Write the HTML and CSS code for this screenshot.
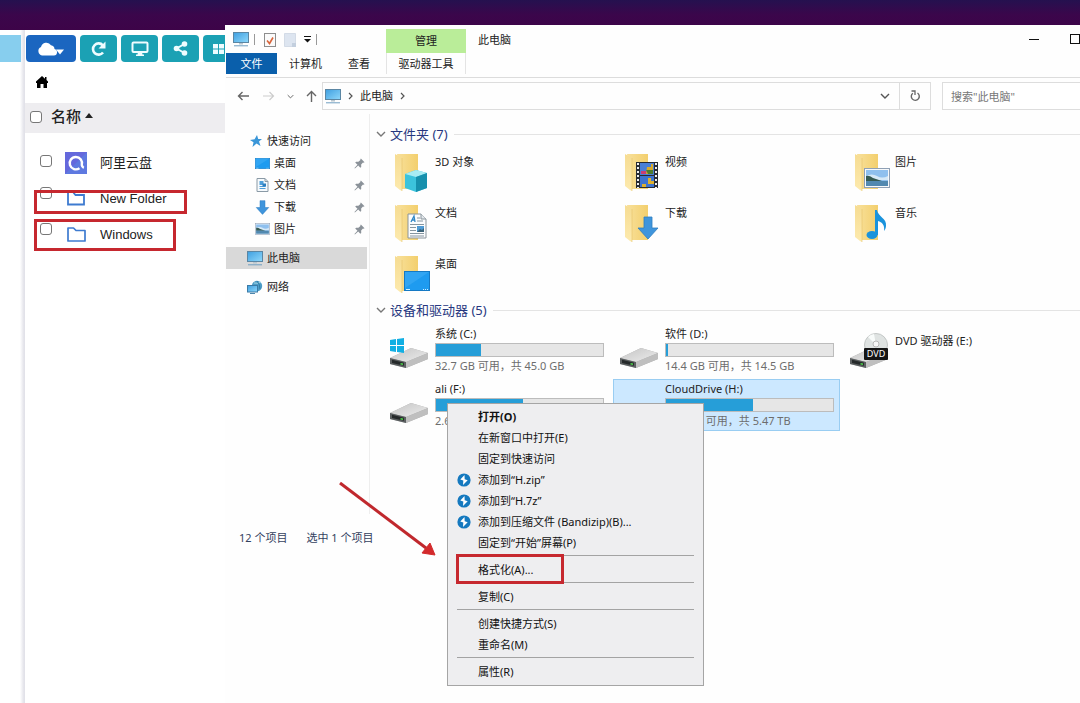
FILE: index.html
```html
<!DOCTYPE html>
<html lang="zh-CN">
<head>
    <meta charset="UTF-8">
    <meta name="viewport" content="width=device-width, initial-scale=1.0">
    <title>此电脑</title>
    <link rel="stylesheet" href="styles.css">
</head>
<body>

<svg class="sprite" width="0" height="0" aria-hidden="true">
    <defs>
        <linearGradient id="gScreen" x1="0" y1="0" x2="1" y2="1">
            <stop offset="0" stop-color="#3f9fe0"/><stop offset="1" stop-color="#8fd8fb"/>
        </linearGradient>
        <linearGradient id="gFolder" x1="0" y1="0" x2="1" y2="0">
            <stop offset="0" stop-color="#f8e09a"/><stop offset="1" stop-color="#f3cf6d"/>
        </linearGradient>
        <linearGradient id="gFlap" x1="0" y1="0" x2="0" y2="1">
            <stop offset="0" stop-color="#f6dc92"/><stop offset="1" stop-color="#fdeaae"/>
        </linearGradient>
        <linearGradient id="gDrive" x1="0" y1="0" x2="1" y2="1">
            <stop offset="0" stop-color="#c4c4c4"/><stop offset="1" stop-color="#ededed"/>
        </linearGradient>
    </defs>
    <symbol id="pc" viewBox="0 0 16 15">
        <rect x="0.5" y="0.5" width="15" height="10" fill="url(#gScreen)" stroke="#5b86a3"/>
        <path d="M6 11h4v1.5H6z" fill="#b9c6cf"/>
        <path d="M1 13.8h14" stroke="#6f9fc0" stroke-width="1"/>
    </symbol>
    <symbol id="folder" viewBox="0 0 38 40">
        <path d="M3 1h21v35H7z" fill="url(#gFolder)"/>
        <path d="M1 1l7 4v33l-2-1-5-4z" fill="url(#gFlap)"/>
        <path d="M8 5v33" stroke="#e6c46a" stroke-width="0.6"/>
    </symbol>
    <symbol id="doc" viewBox="0 0 20 26">
        <path d="M1 1h13l5 5v19H1z" fill="#fbfcfd" stroke="#8a959c"/>
        <path d="M14 1v5h5" fill="#e3e8ec" stroke="#8a959c"/>
        <path d="M4 9l3-6 1 6M5 7h3" fill="none" stroke="#2f86c6" stroke-width="1.3"/>
        <path d="M10 5h3M10 8h6M3 11.500h14M3 14.500h6M3 17.500h6M3 20.500h14M3 23h14" stroke="#8796a1" stroke-width="1"/>
        <rect x="10" y="13" width="7" height="6" fill="#4f9bd4"/>
        <path d="M10 19l3-3 2 1 2-2v4z" fill="#3b6277"/>
    </symbol>
    <symbol id="doc-small" viewBox="0 0 12 14">
        <path d="M.5.5h8l3 3v10H.5z" fill="#f6fafd" stroke="#8a9aa6"/>
        <path d="M8.500.5v3h3" fill="none" stroke="#8a9aa6"/>
        <rect x="3" y="3" width="4" height="4" fill="#4f9fda"/>
        <path d="M3 8.500h6M3 10.500h6" stroke="#4f9fda"/>
        <rect x="6" y="5.500" width="3.500" height="3" fill="#2d7fc0"/>
    </symbol>
    <symbol id="down" viewBox="0 0 22 24">
        <path d="M7 1h8v11h6L11 23 1 12h6z" fill="#3f95dc" stroke="#2d7dc0" stroke-width="0.8"/>
    </symbol>
    <symbol id="photo" viewBox="0 0 26 20">
        <rect x="0.5" y="0.5" width="25" height="19" fill="#f7f9fb" stroke="#8fa0b5"/>
        <rect x="2" y="2" width="22" height="16" fill="#8fc0ee"/>
        <path d="M2 8q6-3 11 0t11 0v4H2z" fill="#d6e9f7"/>
        <path d="M2 8q3-1 7 2l9 3H2z" fill="#365a52"/>
        <path d="M2 13h22v5H2z" fill="#5289b0"/>
    </symbol>
    <symbol id="screen" viewBox="0 0 26 20">
        <rect x="0.5" y="0.5" width="25" height="19" fill="#1e9bf0" stroke="#1579c4"/>
        <path d="M1 1h24L1 17z" fill="#44b0f6" opacity="0.5"/>
        <path d="M2 18.500h4M19 18.500h1M21 18.500h1M23 18.500h1" stroke="#d3efff" stroke-width="1"/>
    </symbol>
    <symbol id="pin" viewBox="0 0 12 12">
        <path d="M7.500.5l4 4-1 .6-.7-.1-2 2.200.1 2.500-1 1L4.600 8.200 1 11.500l-.5-.5 3.300-3.600L1.300 5l1-1 2.500.1 2.200-2-.1-.7z" fill="#8b9299"/>
    </symbol>
    <symbol id="drive" viewBox="0 0 40 22">
        <path d="M1 11L22 1l17 5v6L17 21 1 17z" fill="#a9a9a9"/>
        <path d="M1 11L22 1l17 5-22 9z" fill="url(#gDrive)"/>
        <path d="M17 15l22-9v6l-22 9z" fill="#bfbfbf"/>
        <path d="M1 11l16 4v6L1 17z" fill="#5b5f60"/>
        <path d="M3 12.800l12 3v3L3 16z" fill="#25292a"/>
        <path d="M11.500 16.700l2.500.6" stroke="#4fd24b" stroke-width="1.600"/>
    </symbol>
    <symbol id="chevron" viewBox="0 0 10 6">
        <path d="M1 1l4 4 4-4" fill="none" stroke="currentColor" stroke-width="1.400"/>
    </symbol>
    <symbol id="angle" viewBox="0 0 5 8">
        <path d="M1 1l3 3-3 3" fill="none" stroke="#555" stroke-width="1.200"/>
    </symbol>
    <symbol id="bandizip" viewBox="0 0 14 14">
        <circle cx="7" cy="7" r="6.600" fill="#1579bf"/>
        <path d="M7.500 2L3.300 6.400l3 1L6 12l4.700-4.700-3-1z" fill="#fff"/>
    </symbol>
</svg>

<div class="banner"></div>

<div class="desktop">
    <aside class="tree"><div class="tree-selected"></div></aside>

    <section class="panel">
        <div class="toolbar">
            <button class="tool primary" aria-label="云盘">
                <svg width="28" height="14" viewBox="0 0 28 14"><path d="M5 13.500a4.500 4.500 0 0 1-1-8.500A5.500 5.500 0 0 1 14 3.200 4 4 0 0 1 17.500 7a3.300 3.300 0 0 1-.5 6.500z" fill="#fff"/><path d="M19 7.500h8l-4 5z" fill="#fff"/></svg>
            </button>
            <button class="tool" aria-label="刷新">
                <svg width="17" height="16" viewBox="0 0 17 16"><path d="M12.800 4.300A5.600 5.600 0 1 0 13 11.500" fill="none" stroke="#eefcff" stroke-width="2.600"/><path d="M15.500.5v7h-7z" fill="#eefcff"/></svg>
            </button>
            <button class="tool" aria-label="显示">
                <svg width="18" height="16" viewBox="0 0 18 16"><rect x="1.500" y="1.500" width="15" height="9.500" rx="1" fill="none" stroke="#eefcff" stroke-width="2"/><path d="M7 11h4l.5 2.500H13V15H5v-1.500h1.500z" fill="#eefcff"/></svg>
            </button>
            <button class="tool" aria-label="分享">
                <svg width="15" height="15" viewBox="0 0 15 15"><path d="M11.500 3l-8 4.500 8 4.500" fill="none" stroke="#eefcff" stroke-width="2"/><circle cx="11.500" cy="3" r="2.800" fill="#eefcff"/><circle cx="3.500" cy="7.500" r="2.800" fill="#eefcff"/><circle cx="11.500" cy="12" r="2.800" fill="#eefcff"/></svg>
            </button>
            <button class="tool" aria-label="视图">
                <svg width="17" height="10" viewBox="0 0 17 10"><path d="M0 0h5v4.400H0zM6 0h5v4.400H6zM12 0h5v4.400h-5zM0 5.600h5V10H0zM6 5.600h5V10H6zM12 5.600h5V10h-5z" fill="#eefcff"/></svg>
            </button>
        </div>
        <a class="home" href="#" aria-label="主页">
            <svg width="12" height="12" viewBox="0 0 12 12"><path d="M6 0L0 5.500V7h1v5h3.500V8h3v4H11V7h1V5.500L10.500 4V1H9v1.700z" fill="#000"/></svg>
        </a>

        <table class="files">
            <thead>
                <tr>
                    <th colspan="3"><label><input type="checkbox">名称 <svg width="8" height="5" viewBox="0 0 8 5"><path d="M0 5l4-5 4 5z" fill="#222"/></svg></label></th>
                </tr>
            </thead>
            <tbody>
                <tr>
                    <td class="check"><input type="checkbox" aria-label="阿里云盘"></td>
                    <td class="icon">
                        <svg width="22" height="22" viewBox="0 0 22 22"><rect width="22" height="22" fill="#6468dc"/><path d="M0 22L22 0v22z" fill="#5a86e2" opacity="0.6"/><path d="M14.500 16.200a6.200 6.200 0 1 1 2.300-3.200q.3 2 2 2.800" fill="none" stroke="#fff" stroke-width="2.400"/></svg>
                    </td>
                    <td><a href="#">阿里云盘</a></td>
                </tr>
                <tr>
                    <td class="check"><input type="checkbox" aria-label="New Folder"></td>
                    <td class="icon">
                        <svg width="22" height="15" viewBox="0 0 22 15"><path d="M3 0v12.500h16V3h-8.500L8 0" fill="none" stroke="#3e7bd0" stroke-width="1.800"/></svg>
                    </td>
                    <td><a href="#">New Folder</a></td>
                </tr>
                <tr>
                    <td class="check"><input type="checkbox" aria-label="Windows"></td>
                    <td class="icon">
                        <svg width="22" height="18" viewBox="0 0 22 18"><path d="M3 2v13h17V4.500h-9L8.500 2z" fill="none" stroke="#3e7bd0" stroke-width="1.700" stroke-linejoin="round"/></svg>
                    </td>
                    <td><a href="#">Windows</a></td>
                </tr>
            </tbody>
        </table>
        <div class="mark mark-new"></div>
        <div class="mark mark-windows"></div>
    </section>

    <main class="explorer">
        <header class="ribbon">
            <div class="ribbon-left">
                <div class="quick">
                    <svg width="16" height="15"><use href="#pc"/></svg>
                    <i></i>
                    <svg width="12" height="14" viewBox="0 0 12 14"><rect x="0.5" y="0.5" width="11" height="13" fill="#fafafa" stroke="#8d8d8d"/><path d="M3 7.500l2.500 3L9 4.500" fill="none" stroke="#d9653b" stroke-width="1.600"/></svg>
                    <svg width="12" height="14" viewBox="0 0 12 14"><path d="M.5.5h11v13H.5z" fill="#dde5f0" stroke="#d3dbe6"/><path d="M8 10h4v4H8z" fill="#c3cfde"/></svg>
                    <svg width="7" height="7" viewBox="0 0 7 7"><path d="M0 .5h7" stroke="#111"/><path d="M0 3h7L3.500 6.500z" fill="#111"/></svg>
                    <i></i>
                </div>
                <nav class="tabs">
                    <button class="tab file">文件</button>
                    <button class="tab">计算机</button>
                    <button class="tab">查看</button>
                </nav>
            </div>
            <div class="manage">
                <div class="manage-title">管理</div>
                <button class="tab">驱动器工具</button>
            </div>
            <div class="title">此电脑</div>
            <div class="controls">
                <button aria-label="最小化"><svg width="10" height="10" viewBox="0 0 10 10"><path d="M0 5.500h10" stroke="#111"/></svg></button>
                <button aria-label="最大化"><svg width="10" height="10" viewBox="0 0 10 10"><rect x="0.500" y="0.500" width="9" height="9" fill="none" stroke="#111"/></svg></button>
            </div>
        </header>

        <div class="location">
            <div class="arrows">
                <button aria-label="后退"><svg width="12" height="10" viewBox="0 0 12 10"><path d="M12 5H1.500M5.500 1l-4 4 4 4" fill="none" stroke="#666" stroke-width="1.400"/></svg></button>
                <button aria-label="前进"><svg width="12" height="10" viewBox="0 0 12 10"><path d="M0 5h10.500M6.500 1l4 4-4 4" fill="none" stroke="#ccc" stroke-width="1.200"/></svg></button>
                <button aria-label="历史"><svg width="7" height="5"><use href="#chevron"/></svg></button>
                <button aria-label="上移"><svg width="11" height="12" viewBox="0 0 11 12"><path d="M5.500 12V1.500M1 6l4.500-4.500L10 6" fill="none" stroke="#666" stroke-width="1.400"/></svg></button>
            </div>
            <div class="address">
                <svg width="16" height="15"><use href="#pc"/></svg>
                <svg width="5" height="8"><use href="#angle"/></svg>
                <span>此电脑</span>
                <svg width="5" height="8"><use href="#angle"/></svg>
                <button class="drop" aria-label="展开"><svg width="10" height="6"><use href="#chevron"/></svg></button>
                <button class="refresh" aria-label="刷新"><svg width="11" height="12" viewBox="0 0 11 12"><path d="M2.800 3.200A4 4 0 1 0 7.500 3" fill="none" stroke="#666" stroke-width="1.400"/><path d="M1.500 1h3.500v4" fill="none" stroke="#666" stroke-width="1.300"/></svg></button>
            </div>
            <input class="search" type="text" placeholder='搜索"此电脑"' aria-label="搜索">
        </div>

        <div class="view">
            <nav class="places">
                <a href="#"><svg width="14" height="14" viewBox="0 0 14 14"><path d="M8 1l1.200 4H13L10 7.500l1.500 4.500L7.500 9.500 3.500 13l1-4.800L1 6l4.600-.8z" fill="#3a96d8"/></svg>快速访问</a>
                <a class="child" href="#"><svg width="15" height="11" viewBox="0 0 26 20" preserveAspectRatio="none"><use href="#screen" width="26" height="20"/></svg>桌面<svg class="pin" width="11" height="11"><use href="#pin"/></svg></a>
                <a class="child" href="#"><svg width="15" height="14"><use href="#doc-small"/></svg>文档<svg class="pin" width="11" height="11"><use href="#pin"/></svg></a>
                <a class="child" href="#"><svg width="15" height="15"><use href="#down"/></svg>下载<svg class="pin" width="11" height="11"><use href="#pin"/></svg></a>
                <a class="child" href="#"><svg width="15" height="12"><use href="#photo"/></svg>图片<svg class="pin" width="11" height="11"><use href="#pin"/></svg></a>
                <a class="root selected" href="#"><svg width="16" height="15"><use href="#pc"/></svg>此电脑</a>
                <a class="root" href="#"><svg width="16" height="15" viewBox="0 0 16 15"><circle cx="10" cy="6" r="5.200" fill="#4d9cc6"/><path d="M7 3q4 1 7-1" stroke="#a4d6e6" fill="none"/><path d="M10 1q3 3 3 8" stroke="#2f7da8" fill="none"/><rect x="0.500" y="5.500" width="10" height="6.500" fill="url(#gScreen)" stroke="#3c7ba6"/><path d="M3 13.500h5" stroke="#4d87ad"/></svg>网络</a>
            </nav>

            <div class="content">
                <h2><svg width="10" height="6"><use href="#chevron"/></svg>文件夹 (7)</h2>
                <div class="grid">
                    <a class="folder" href="#">
                        <svg width="38" height="40" viewBox="0 0 38 40"><use href="#folder" width="38" height="40"/><path d="M11 21l11-4 11 3v15l-11 4-11-4z" fill="#3cc3dc"/><path d="M11 21l11-4 11 3-11 4z" fill="#a9ecf3"/><path d="M22 24l11-4v15l-11 4z" fill="#1690ad"/></svg>
                        <span>3D 对象</span>
                    </a>
                    <a class="folder" href="#">
                        <svg width="38" height="40" viewBox="0 0 38 40"><use href="#folder" width="38" height="40"/><rect x="12" y="9" width="22" height="26" fill="#272b33"/><rect x="16" y="10" width="14" height="12" fill="#4a7fd6"/><rect x="16" y="23" width="14" height="11" fill="#3f74cf"/><path d="M17 18h5v3h-5z" fill="#cc3d74"/><path d="M23 14h4v-3h2v7h-3v3h-4z" fill="#d9aa2a"/><path d="M22 17h7v4h-5z" fill="#4d7c2e"/><path d="M24 25h3v3h3v3h-6zM18 31h4v3h-4z" fill="#dfb12e"/><path d="M14 10v25M32 10v25" stroke="#f1f1f1" stroke-width="2" stroke-dasharray="2 2"/></svg>
                        <span>视频</span>
                    </a>
                    <a class="folder" href="#">
                        <svg width="38" height="40" viewBox="0 0 38 40"><use href="#folder" width="38" height="40"/><use href="#photo" x="10" y="15" width="26" height="20"/></svg>
                        <span>图片</span>
                    </a>
                    <a class="folder" href="#">
                        <svg width="38" height="40" viewBox="0 0 38 40"><use href="#folder" width="38" height="40"/><use href="#doc" x="13" y="9" width="20" height="26"/></svg>
                        <span>文档</span>
                    </a>
                    <a class="folder" href="#">
                        <svg width="38" height="40" viewBox="0 0 38 40"><use href="#folder" width="38" height="40"/><use href="#down" x="13" y="12" width="22" height="24"/></svg>
                        <span>下载</span>
                    </a>
                    <a class="folder" href="#">
                        <svg width="38" height="40" viewBox="0 0 38 40"><use href="#folder" width="38" height="40"/><ellipse cx="18" cy="31" rx="5.500" ry="4" fill="#1a93dc"/><path d="M21 31V6h2c1 7 10 8 9 16-.3 3-1.300 4-2 5 1-6-2-9-6-10v14z" fill="#1a93dc"/></svg>
                        <span>音乐</span>
                    </a>
                    <a class="folder" href="#">
                        <svg width="38" height="40" viewBox="0 0 38 40"><use href="#folder" width="38" height="40"/><use href="#screen" x="10" y="16" width="26" height="20"/></svg>
                        <span>桌面</span>
                    </a>
                </div>

                <h2><svg width="10" height="6"><use href="#chevron"/></svg>设备和驱动器 (5)</h2>
                <div class="grid">
                    <a class="disk" href="#">
                        <svg width="40" height="34" viewBox="0 0 40 34"><use href="#drive" y="11" width="40" height="22"/><path d="M1 4l6-1v6H1zM8 3l7-1v7H8zM1 10h6v6l-6-1zM8 10h7v7l-7-1z" fill="#12afe3"/></svg>
                        <div class="info">
                            <span class="name">系统 (C:)</span>
                            <div class="bar"><div class="used" style="width: 27%"></div></div>
                            <span class="free">32.7 GB 可用，共 45.0 GB</span>
                        </div>
                    </a>
                    <a class="disk" href="#">
                        <svg width="40" height="34" viewBox="0 0 40 34"><use href="#drive" y="11" width="40" height="22"/></svg>
                        <div class="info">
                            <span class="name">软件 (D:)</span>
                            <div class="bar"><div class="used" style="width: 1%"></div></div>
                            <span class="free">14.4 GB 可用，共 14.5 GB</span>
                        </div>
                    </a>
                    <a class="disk dvd" href="#">
                        <svg width="40" height="38" viewBox="0 0 40 38"><use href="#drive" y="15" width="40" height="22"/><circle cx="27" cy="13" r="11.500" fill="#dfe3e2" stroke="#c3c7c6"/><path d="M27 13L19 5a11 11 0 0 1 6-3z" fill="#f8fbfa"/><circle cx="27" cy="12" r="3" fill="#f7f7f7" stroke="#b8b8b8"/><rect x="15" y="16" width="24" height="12" rx="1" fill="#151515"/><text x="27" y="25" class="dvd-label">DVD</text></svg>
                        <div class="info"><span class="name">DVD 驱动器 (E:)</span></div>
                    </a>
                    <a class="disk" href="#">
                        <svg width="40" height="34" viewBox="0 0 40 34"><use href="#drive" y="11" width="40" height="22"/></svg>
                        <div class="info">
                            <span class="name">ali (F:)</span>
                            <div class="bar"><div class="used" style="width: 52%"></div></div>
                            <span class="free">2.63 TB 可用，共 5.47 TB</span>
                        </div>
                    </a>
                    <a class="disk active" href="#">
                        <svg width="40" height="34" viewBox="0 0 40 34"><use href="#drive" y="11" width="40" height="22"/></svg>
                        <div class="info">
                            <span class="name">CloudDrive (H:)</span>
                            <div class="bar"><div class="used" style="width: 52%"></div></div>
                            <span class="free">2.63 TB 可用，共 5.47 TB</span>
                        </div>
                    </a>
                </div>
            </div>
        </div>

        <footer class="status">
            <span>12 个项目</span>
            <span>选中 1 个项目</span>
        </footer>

        <div class="menu">
            <button><b>打开(O)</b></button>
            <button>在新窗口中打开(E)</button>
            <button>固定到快速访问</button>
            <button><svg width="14" height="14"><use href="#bandizip"/></svg>添加到“H.zip”</button>
            <button><svg width="14" height="14"><use href="#bandizip"/></svg>添加到“H.7z”</button>
            <button><svg width="14" height="14"><use href="#bandizip"/></svg>添加到压缩文件 (Bandizip)(B)...</button>
            <button>固定到“开始”屏幕(P)</button>
            <hr>
            <button>格式化(A)...</button>
            <hr>
            <button>复制(C)</button>
            <hr>
            <button>创建快捷方式(S)</button>
            <button>重命名(M)</button>
            <hr>
            <button>属性(R)</button>
            <div class="mark mark-format"></div>
        </div>

        <svg class="arrow" width="100" height="78" viewBox="0 0 100 78"><path d="M2 3l86 65" stroke="#c0282d" stroke-width="3"/><path d="M97 75l-13-2 8-10z" fill="#d32a2c" stroke="#d32a2c"/></svg>
    </main>
</div>

</body>
</html>
```
FILE: styles.css
```css
* {
    box-sizing: border-box;
}
body {
    margin: 0;
    min-height: 100vh;
    display: flex;
    flex-direction: column;
    overflow: hidden;
    background-color: #fff;
    color: #222;
    font-family: "Noto Sans", "Noto Sans CJK SC", sans-serif;
    font-size: 11px;
    line-height: 16px;
}
a {
    color: inherit;
    text-decoration: none;
}
button {
    padding: 0;
    border: none;
    background: none;
    color: inherit;
    font: inherit;
}
svg {
    display: block;
    flex: none;
}
.sprite {
    position: absolute;
}
.banner {
    height: 30px;
    background: linear-gradient(#25114f, #3b064b 50%, #3d0448);
}
.desktop {
    flex: 1;
    display: flex;
}

/* cloud file manager */
.tree {
    width: 25px;
    padding-top: 5px;
    background: linear-gradient(to right, #fff 20px, #e2e2e9 24px);
}
.tree-selected {
    width: 21px;
    height: 27px;
    background-color: #87ceee;
}
.panel {
    position: relative;
    width: 200px;
    overflow: hidden;
    font-family: "Liberation Sans", "Noto Sans CJK SC", sans-serif;
    font-size: 13px;
}
.toolbar {
    display: flex;
    gap: 4px;
    padding: 5px 0 0 1px;
}
.tool {
    flex: none;
    display: flex;
    align-items: center;
    justify-content: center;
    width: 37px;
    height: 27px;
    border-radius: 4px;
    background-color: #1ba1b4;
}
.tool.primary {
    width: 50px;
    background-color: #1b66c0;
}
.home {
    display: block;
    padding: 14px 11px 15px;
}
.files {
    width: 100%;
    border-spacing: 0;
    border-collapse: collapse;
}
.files th {
    height: 30px;
    padding: 0 5px 2px;
    background-color: #eeedf0;
    font-size: 15px;
    font-weight: 500;
    text-align: left;
}
.files label {
    display: flex;
    align-items: center;
}
.files th svg {
    margin: 0 0 4px 4px;
}
.files input {
    appearance: none;
    display: block;
    width: 12px;
    height: 12px;
    margin: 0 9px 0 0;
    border: 1px solid #777;
    border-radius: 3px;
    background-color: #fff;
}
.files tbody::before {
    content: "";
    display: block;
    height: 12px;
}
.files td {
    height: 36px;
    padding: 0;
}
.files .check {
    width: 40px;
    padding: 0 0 12px 15px;
}
.files tr:first-child .check {
    padding-bottom: 4px;
}
.files .icon {
    width: 35px;
}
.mark {
    position: absolute;
    border: 3px solid #c6282f;
}
.mark-new {
    left: 9px;
    top: 160px;
    width: 153px;
    height: 24px;
}
.mark-windows {
    left: 9px;
    top: 189px;
    width: 142px;
    height: 32px;
}

/* explorer window */
.explorer {
    position: relative;
    flex: 1;
    min-width: 0;
    margin-top: -5px;
    padding-left: 1px;
    background-color: #fefefe;
}
.ribbon {
    display: flex;
    height: 53px;
    border-bottom: 1px solid #dcdcdc;
}
.ribbon-left {
    width: 160px;
}
.quick {
    display: flex;
    align-items: center;
    gap: 8px;
    height: 28px;
    padding: 1px 0 0 7px;
}
.quick i {
    width: 1px;
    height: 11px;
    margin: 0 1px 0 -3px;
    background-color: #999;
}
.tabs {
    display: flex;
}
.tab {
    display: block;
    height: 21px;
    padding: 0 12px;
}
.tab.file {
    width: 51px;
    background-color: #0a5fab;
    color: #fff;
}
.tab:last-child {
    padding: 0 14px;
}
.manage {
    width: 80px;
    height: 49px;
    padding-top: 4px;
}
.manage-title {
    height: 24px;
    background-color: #baed99;
    line-height: 24px;
    text-align: center;
}
.manage .tab {
    width: 80px;
    padding: 0;
    border: solid #e4e4e4;
    border-width: 0 1px;
}
.title {
    flex: 1;
    padding: 7px 12px;
}
.controls {
    display: flex;
    gap: 31px;
    height: 28px;
}
.location {
    display: flex;
    padding-top: 4px;
}
.arrows {
    display: flex;
    align-items: center;
    gap: 12px;
    width: 96px;
    padding-left: 11px;
    color: #666;
}
.arrows button:nth-child(2) {
    margin-left: 2px;
}
.address {
    flex: 1;
    display: flex;
    align-items: center;
    gap: 7px;
    height: 28px;
    padding-left: 2px;
    border: 1px solid #ddd;
}
.drop {
    margin-left: auto;
    padding: 0 2px;
    color: #555;
}
.refresh {
    display: flex;
    align-items: center;
    justify-content: center;
    align-self: stretch;
    width: 31px;
    border-left: 1px solid #ddd;
}
.search {
    width: 138px;
    height: 28px;
    margin-left: 11px;
    padding: 0 8px;
    border: 1px solid #ddd;
    border-right: none;
    background-color: #fff;
    font: inherit;
}
.search::placeholder {
    color: #777;
}
.view {
    display: flex;
    padding-top: 4px;
}
.places {
    width: 144px;
    padding: 16px 2px 0 0;
    border-right: 1px solid #eee;
}
.places a {
    display: flex;
    align-items: center;
    gap: 4px;
    height: 22px;
    padding-left: 23px;
}
.places .child {
    padding-left: 29px;
}
.places .root {
    margin-top: 7px;
    padding-left: 21px;
}
.places .selected {
    background-color: #d9d9d9;
}
.places .pin {
    margin: 0 2px 0 auto;
}
.content {
    flex: 1;
    padding: 10px 0 81px 6px;
}
.content h2 {
    display: flex;
    align-items: center;
    gap: 4px;
    height: 20px;
    margin: 0 0 4px;
    color: #27377f;
    font-size: 13px;
    font-weight: 400;
}
.content h2 svg {
    color: #777;
}
.content h2::after {
    content: "";
    flex: 1;
    height: 1px;
    margin-left: 2px;
    background-color: #e4e4e4;
}
.grid {
    display: grid;
    grid-template-columns: repeat(auto-fill, 227px);
    gap: 3px;
    margin-bottom: 2px;
    padding-left: 7px;
}
.folder {
    display: flex;
    gap: 3px;
    height: 48px;
    padding: 5px 0 0 11px;
}
.disk {
    display: flex;
    gap: 6px;
    height: 52px;
    padding: 1px 5px 0;
    border: 1px solid transparent;
}
.folder span {
    line-height: 18px;
}
.disk > svg {
    margin-top: 10px;
}
.disk.active {
    border-color: #99cdf2;
    background-color: #cce8ff;
}
.info {
    width: 170px;
}
.name,
.free {
    display: block;
}
.bar {
    height: 14px;
    margin: 1px 0;
    border: 1px solid #bcbcbc;
    background-color: #e6e6e6;
}
.used {
    height: 100%;
    background-color: #269ed8;
}
.free {
    color: #6d6d6d;
    white-space: nowrap;
}
.disk.dvd > svg {
    margin-top: 6px;
}
.dvd .info {
    padding-top: 7px;
}
.dvd-label {
    fill: #fff;
    font-size: 9px;
    text-anchor: middle;
}
.status {
    display: flex;
    gap: 19px;
    padding: 16px 13px;
    color: #33415f;
}
.menu {
    position: absolute;
    left: 222px;
    top: 378px;
    width: 257px;
    padding: 2px 0 3px;
    border: 1px solid #a5a5a5;
    background-color: #eeeef0;
    color: #111;
}
.menu button {
    display: flex;
    align-items: center;
    width: 100%;
    height: 21px;
    padding-left: 30px;
}
.menu button svg {
    margin: 0 7px 0 -21px;
}
.menu hr {
    height: 1px;
    margin: 2px 9px 3px;
    border: none;
    background-color: #a3a3a3;
}
.mark-format {
    left: 8px;
    top: 150px;
    width: 108px;
    height: 30px;
}
.arrow {
    position: absolute;
    left: 113px;
    top: 455px;
}
```
